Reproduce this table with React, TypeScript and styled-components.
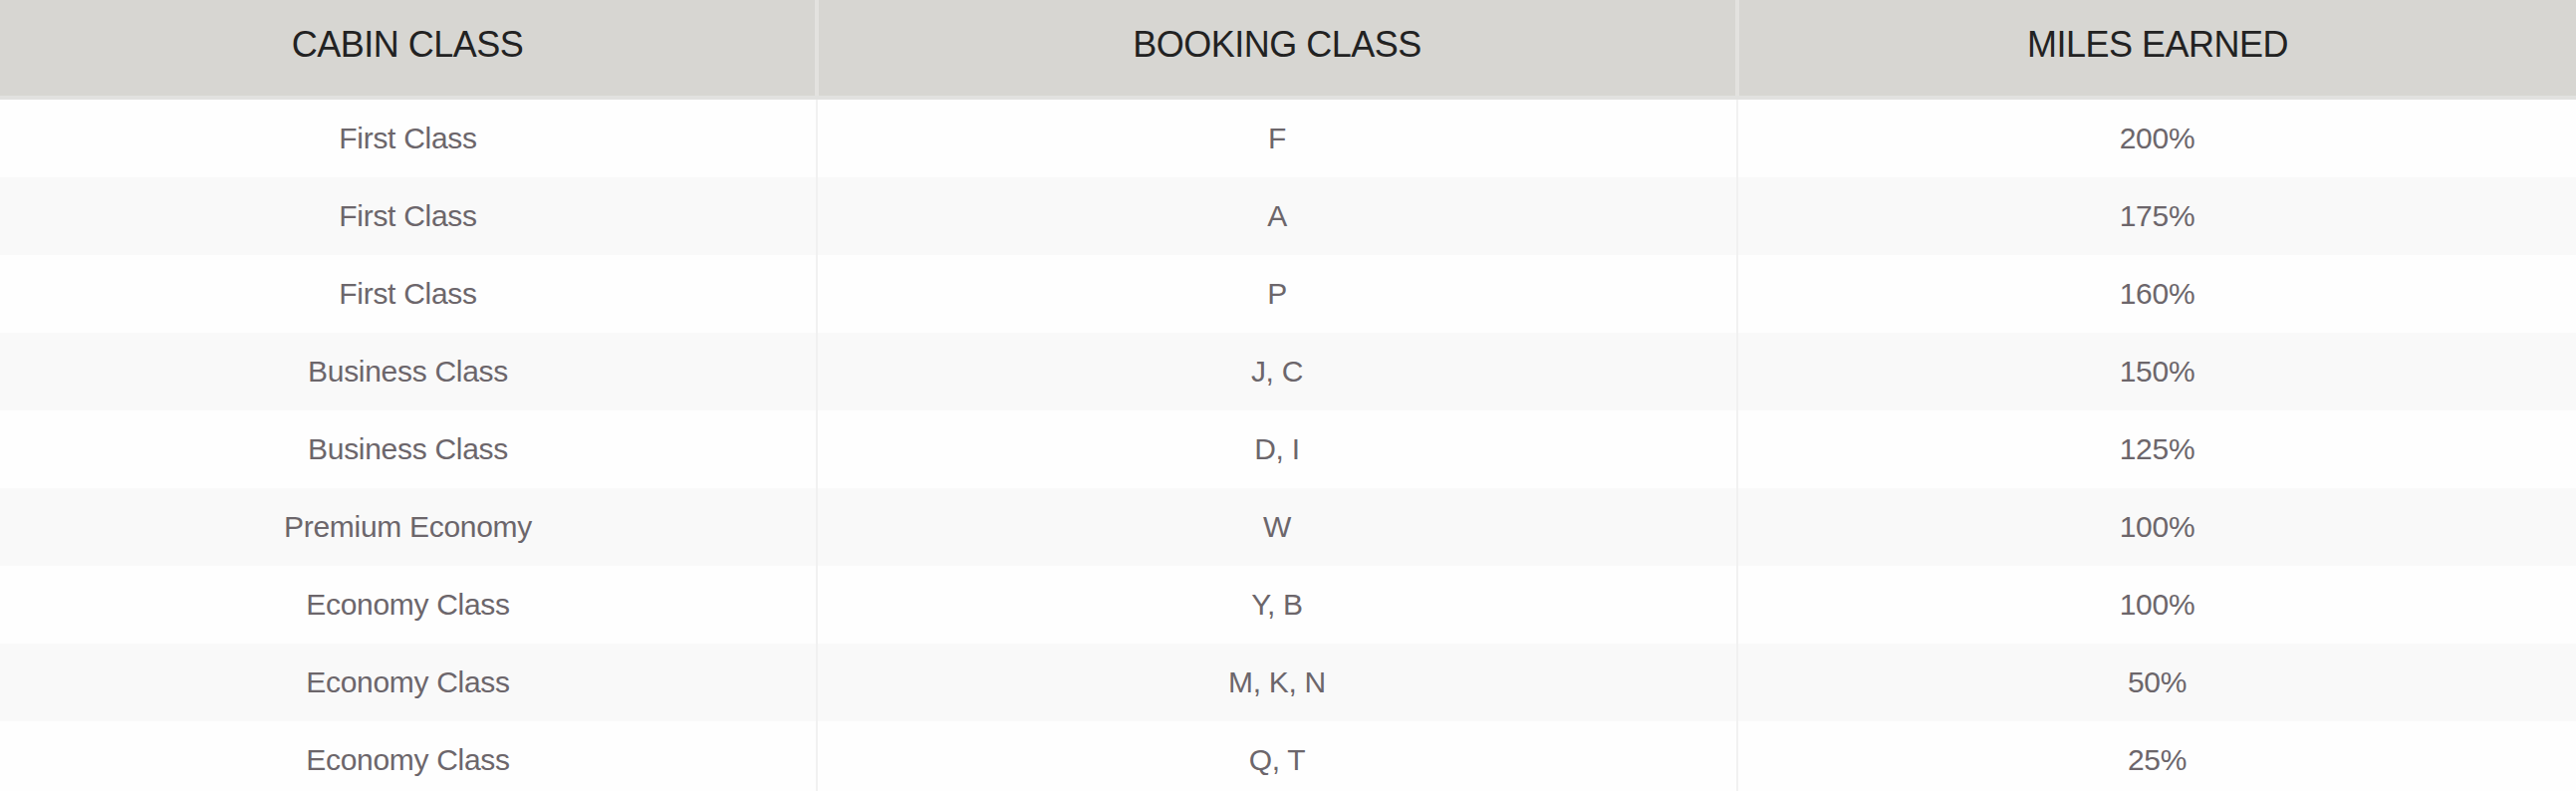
import styled, { createGlobalStyle } from 'styled-components';

const GlobalStyle = createGlobalStyle`
  html, body {
    margin: 0;
    padding: 0;
    background: #ffffff;
  }

  body {
    font-family: 'Liberation Sans', Arial, sans-serif;
    -webkit-font-smoothing: antialiased;
  }
`;

/* =========================
   DATA
========================= */
const milesData = [
  { cabin: 'First Class', booking: 'F', miles: '200%' },
  { cabin: 'First Class', booking: 'A', miles: '175%' },
  { cabin: 'First Class', booking: 'P', miles: '160%' },
  { cabin: 'Business Class', booking: 'J, C', miles: '150%' },
  { cabin: 'Business Class', booking: 'D, I', miles: '125%' },
  { cabin: 'Premium Economy', booking: 'W', miles: '100%' },
  { cabin: 'Economy Class', booking: 'Y, B', miles: '100%' },
  { cabin: 'Economy Class', booking: 'M, K, N', miles: '50%' },
  { cabin: 'Economy Class', booking: 'Q, T', miles: '25%' },
];

/* =========================
   TABLE
========================= */
const Table = styled.div`
  width: 100%;
  display: flex;
  flex-direction: column;
`;

const Row = styled.div<{ $striped?: boolean }>`
  display: grid;
  grid-template-columns: 820px 924px 1fr;
  height: 78px;
  background: ${({ $striped }) => ($striped ? '#f9f9f9' : '#fefefe')};
`;

const HeaderRow = styled(Row)`
  height: 96px;
  background: #d7d6d2;
  border-bottom: 4px solid #e1e1df;
`;

const HeaderCell = styled.div`
  display: flex;
  align-items: center;
  justify-content: center;
  padding-bottom: 6px;
  box-sizing: border-box;
  font-size: 36px;
  letter-spacing: -0.5px;
  color: #222222;
  text-transform: uppercase;
  border-left: 2px solid #e3e2df;
  border-right: 2px solid #e3e2df;

  &:first-child {
    border-left: none;
  }

  &:last-child {
    border-right: none;
  }
`;

const Cell = styled.div`
  display: flex;
  align-items: center;
  justify-content: center;
  box-sizing: border-box;
  font-size: 30px;
  letter-spacing: -0.3px;
  color: #6c666b;
  border-left: 1px solid #f1f1f1;
  border-right: 1px solid #f1f1f1;

  &:first-child {
    border-left: none;
  }

  &:last-child {
    border-right: none;
  }
`;

/* =========================
   COMPONENT
========================= */
export default function App() {
  return (
    <>
      <GlobalStyle />
      <Table>
        <HeaderRow>
          <HeaderCell>Cabin Class</HeaderCell>
          <HeaderCell>Booking Class</HeaderCell>
          <HeaderCell>Miles Earned</HeaderCell>
        </HeaderRow>

        {milesData.map((row, index) => (
          <Row key={index} $striped={index % 2 === 1}>
            <Cell>{row.cabin}</Cell>
            <Cell>{row.booking}</Cell>
            <Cell>{row.miles}</Cell>
          </Row>
        ))}
      </Table>
    </>
  );
}
